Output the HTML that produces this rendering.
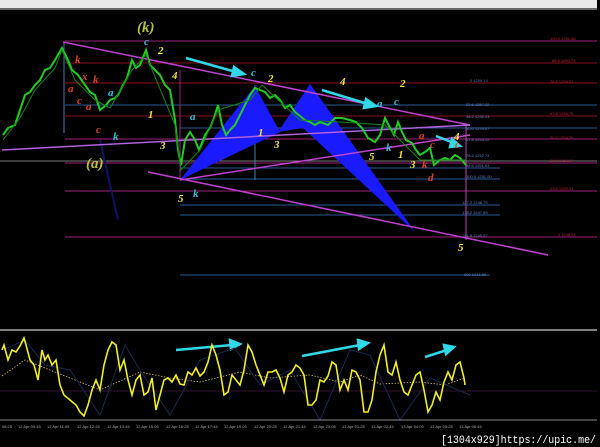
<!DOCTYPE html>
<html><head><meta charset="utf-8"><style>
html,body{margin:0;padding:0;background:#000;width:600px;height:447px;overflow:hidden}
svg{display:block}
text{font-family:"Liberation Serif",serif;font-style:italic;font-weight:bold}
.s{font-family:"Liberation Sans",sans-serif;font-style:normal;font-weight:normal;font-size:4px}
</style></head><body>
<svg width="600" height="447" viewBox="0 0 600 447" xmlns="http://www.w3.org/2000/svg">
<rect width="600" height="447" fill="#000"/>
<rect x="0" y="0" width="597" height="8" fill="#e8e8e8"/>
<rect x="0" y="8" width="597" height="2" fill="#666"/>
<g stroke-width="1">
<line x1="65" y1="41" x2="597" y2="41" stroke="#a0207a"/>
<line x1="65" y1="63" x2="597" y2="63" stroke="#8a1020"/>
<line x1="65" y1="83" x2="597" y2="83" stroke="#8a1020"/>
<line x1="65" y1="105" x2="597" y2="105" stroke="#2a5a9a"/>
<line x1="65" y1="116" x2="597" y2="116" stroke="#8a1020"/>
<line x1="180" y1="128" x2="597" y2="128" stroke="#2a5a9a"/>
<line x1="65" y1="139" x2="597" y2="139" stroke="#a0207a"/>
<line x1="0" y1="161" x2="597" y2="161" stroke="#777"/>
<line x1="65" y1="163" x2="597" y2="163" stroke="#a0207a"/>
<line x1="180" y1="168" x2="500" y2="168" stroke="#2a5a9a"/>
<line x1="180" y1="179" x2="500" y2="179" stroke="#2a5a9a"/>
<line x1="65" y1="191" x2="597" y2="191" stroke="#a0207a"/>
<line x1="180" y1="205" x2="500" y2="205" stroke="#2a5a9a"/>
<line x1="180" y1="215" x2="500" y2="215" stroke="#2a5a9a"/>
<line x1="65" y1="237" x2="597" y2="237" stroke="#a0207a"/>
<line x1="180" y1="275" x2="490" y2="275" stroke="#2a5a9a"/>
<line x1="466" y1="125" x2="466" y2="240" stroke="#c040c0"/>
<line x1="64" y1="42" x2="64" y2="133" stroke="#3a80b0"/>
<line x1="180" y1="70" x2="180" y2="180" stroke="#a0207a"/>
<line x1="255" y1="85" x2="255" y2="180" stroke="#3a80b0"/>
<line x1="100" y1="140" x2="118" y2="220" stroke="#101060" stroke-width="2"/>
</g>
<polygon points="180,180 255,86 280,132" fill="#1a1aff"/>
<polygon points="278,132 310,84 415,232 303,128" fill="#1a1aff"/>
<g stroke="#c040d0" stroke-width="1.5" fill="none">
<line x1="63" y1="42" x2="470" y2="125"/>
<line x1="2" y1="150" x2="470" y2="125" stroke="#b060e0"/>
<line x1="148" y1="172" x2="548" y2="255"/>
<line x1="180" y1="180" x2="470" y2="135"/>
</g>
<polyline fill="none" stroke="#22cc22" stroke-width="2" points="3,135 8,128 15,125 20,110 25,95 30,92 35,85 40,80 45,70 50,68 55,60 62,48 68,60 72,70 78,75 85,85 90,92 95,95 100,110 106,105 110,100 115,98 118,95 123,85 127,78 132,60 136,68 140,65 146,50 150,65 155,70 160,75 165,85 170,90 175,120 178,150 181,165 185,140 190,132 195,140 199,150 205,135 210,128 214,118 218,105 222,125 226,135 230,130 235,125 240,115 245,105 250,95 255,88 260,90 265,92 270,98 275,95 280,100 285,108 290,105 295,112 300,116 305,120 310,122 315,125 320,122 328,125 335,118 342,118 350,120 356,122 362,128 368,138 375,142 380,135 385,118 390,128 394,135 398,122 402,132 406,140 412,143 416,150 420,155 425,152 430,148 434,165 440,160 445,158 450,160 455,155 460,158 466,165"/>
<polyline fill="none" stroke="#118811" stroke-width="1" points="3,140 20,118 35,90 55,68 62,50 75,80 95,100 110,108 132,70 146,55 175,125 181,170 200,150 218,110 250,100 262,85 300,120 340,122 385,125 420,160 466,160"/>
<g stroke="#30d8e8" stroke-width="2.5" fill="#30d8e8">
<line x1="186" y1="58" x2="236" y2="72"/><polygon points="244,74 234,67 232,76"/>
<line x1="322" y1="90" x2="368" y2="104"/><polygon points="376,106 366,99 364,108"/>
<line x1="436" y1="136" x2="454" y2="143"/><polygon points="460,146 452,139 450,147"/>
<line x1="176" y1="350" x2="232" y2="345"/><polygon points="240,344 230,340 231,349"/>
<line x1="302" y1="356" x2="360" y2="345"/><polygon points="368,343 358,340 359,349"/>
<line x1="425" y1="357" x2="447" y2="350"/><polygon points="454,347 444,345 446,354"/>
</g>
<g font-size="11">
<text x="137" y="32" fill="#b8c040" font-size="15">(k)</text>
<text x="86" y="168" fill="#b8c040" font-size="15">(a)</text>
<g fill="#f0e040">
<text x="158" y="54">2</text><text x="172" y="79">4</text><text x="268" y="82">2</text>
<text x="148" y="118">1</text><text x="160" y="149">3</text><text x="258" y="136">1</text>
<text x="274" y="148">3</text><text x="178" y="202">5</text><text x="340" y="85">4</text>
<text x="400" y="87">2</text><text x="369" y="160">5</text><text x="398" y="158">1</text>
<text x="410" y="168">3</text><text x="454" y="140">4</text><text x="458" y="251">5</text>
</g>
<g fill="#e04020">
<text x="75" y="63">k</text><text x="82" y="80">x</text><text x="93" y="83">k</text>
<text x="68" y="92">a</text><text x="77" y="104">c</text><text x="86" y="110">a</text>
<text x="96" y="133">c</text><text x="419" y="139">a</text><text x="430" y="148">c</text>
<text x="422" y="168">k</text><text x="428" y="181">d</text><text x="455" y="148">c</text>
</g>
<g fill="#30c0d8">
<text x="144" y="45">c</text><text x="108" y="96">a</text><text x="113" y="140">k</text>
<text x="190" y="120">a</text><text x="193" y="197">k</text><text x="251" y="76">c</text>
<text x="377" y="107">a</text><text x="394" y="105">c</text><text x="386" y="151">k</text>
</g>
</g>
<g fill="#6080c0">
<text class="s" x="470" y="82" fill="#5070b0">0 1259.14</text>
<text class="s" x="466" y="106" fill="#6080c0">23.6 1257.22</text>
<text class="s" x="466" y="118" fill="#6080c0">38.2 1256.03</text>
<text class="s" x="466" y="130" fill="#6080c0">50.0 1255.07</text>
<text class="s" x="466" y="141" fill="#6080c0">61.8 1254.11</text>
<text class="s" x="466" y="157" fill="#6080c0">78.6 1252.74</text>
<text class="s" x="466" y="167" fill="#6080c0">88.6 1251.93</text>
<text class="s" x="466" y="178" fill="#6080c0">100.0 1251.00</text>
<text class="s" x="462" y="204" fill="#6080c0">127.2 1248.79</text>
<text class="s" x="462" y="214" fill="#6080c0">138.2 1247.89</text>
<text class="s" x="462" y="237" fill="#6080c0">161.8 1245.97</text>
<text class="s" x="464" y="276" fill="#6080c0">200 1241.86</text>
</g>
<g>
<text class="s" x="550" y="40" fill="#c02030">100.0 1261.68</text>
<text class="s" x="552" y="62" fill="#c02030">88.6 1260.79</text>
<text class="s" x="550" y="83" fill="#c02030">78.6 1259.53</text>
<text class="s" x="550" y="115" fill="#c02030">61.8 1256.75</text>
<text class="s" x="550" y="139" fill="#c02030">50.0 1254.79</text>
<text class="s" x="550" y="162" fill="#c02030">38.2 1252.84</text>
<text class="s" x="550" y="190" fill="#c02030">23.6 1250.41</text>
<text class="s" x="558" y="236" fill="#c02030">0 1246.51</text>
</g>
<line x1="0" y1="330" x2="597" y2="330" stroke="#aaa" stroke-width="1.5"/>
<line x1="0" y1="391" x2="597" y2="391" stroke="#301030"/>
<polyline fill="none" stroke="#d8c060" stroke-width="0.8" stroke-dasharray="1.5,1.5" points="2,376 25,360 50,370 100,390 140,372 170,378 200,382 240,372 270,378 310,375 340,382 360,375 380,384 420,382 445,385 465,378"/>
<polyline fill="none" stroke="#182850" stroke-width="1" points="3,350 25,340 45,365 70,370 100,415 125,345 140,370 170,415 200,360 235,348 260,385 290,370 320,420 350,350 370,355 400,420 430,378 470,395"/>
<polyline fill="none" stroke="#f0f020" stroke-width="1.6" points="2,350 4,345 8,360 12,350 16,352 20,346 24,338 26,345 30,360 34,365 38,380 42,350 45,360 48,355 52,365 56,360 60,385 64,395 70,400 76,405 80,412 84,416 88,405 92,390 96,380 100,390 104,365 108,350 112,342 116,345 120,370 124,360 128,380 132,395 136,380 140,375 144,395 148,392 152,378 156,410 160,395 164,380 168,378 172,382 176,375 180,384 184,385 188,372 192,375 196,368 200,376 204,372 208,362 212,345 216,355 220,370 224,395 228,392 232,375 236,380 240,385 244,370 248,345 252,352 256,365 260,375 264,385 268,372 272,372 276,370 280,378 284,392 288,375 292,372 296,365 300,368 304,375 308,405 312,405 316,400 320,380 324,382 328,376 332,362 336,365 340,390 344,380 348,390 352,370 356,372 360,380 364,412 368,412 372,400 376,372 380,355 384,345 388,372 392,375 396,362 400,380 404,392 408,395 412,385 416,375 420,372 424,390 428,412 432,405 436,392 440,400 444,382 448,372 452,380 456,365 460,362 464,378 465,385"/>
<line x1="0" y1="420" x2="597" y2="420" stroke="#888"/>
<g>
<text class="s" x="2" y="428" fill="#aaa">08:25</text><text class="s" x="18" y="428" fill="#aaa">12 Apr 09:45</text>
<text class="s" x="47" y="428" fill="#aaa">12 Apr 11:05</text><text class="s" x="77" y="428" fill="#aaa">12 Apr 12:25</text>
<text class="s" x="107" y="428" fill="#aaa">12 Apr 13:45</text><text class="s" x="136" y="428" fill="#aaa">12 Apr 15:05</text>
<text class="s" x="166" y="428" fill="#aaa">12 Apr 16:25</text><text class="s" x="195" y="428" fill="#aaa">12 Apr 17:45</text>
<text class="s" x="224" y="428" fill="#aaa">12 Apr 19:05</text><text class="s" x="254" y="428" fill="#aaa">12 Apr 20:25</text>
<text class="s" x="283" y="428" fill="#aaa">12 Apr 21:45</text><text class="s" x="313" y="428" fill="#aaa">12 Apr 23:05</text>
<text class="s" x="342" y="428" fill="#aaa">13 Apr 01:25</text><text class="s" x="371" y="428" fill="#aaa">13 Apr 02:45</text>
<text class="s" x="401" y="428" fill="#aaa">13 Apr 04:05</text><text class="s" x="430" y="428" fill="#aaa">13 Apr 05:25</text>
<text class="s" x="459" y="428" fill="#aaa">13 Apr 06:45</text>
</g>
<text x="441" y="443" fill="#fff" textLength="155" lengthAdjust="spacingAndGlyphs" style="font-family:'Liberation Mono',monospace;font-style:normal;font-weight:normal;font-size:11px">[1304x929]https://upic.me/</text>
</svg>
</body></html>
